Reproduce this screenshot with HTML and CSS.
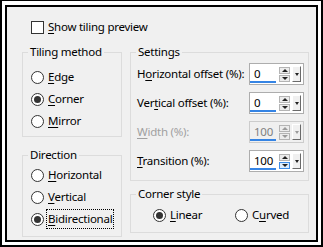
FILE: index.html
```html
<!DOCTYPE html>
<html lang="en">

<head>
    <meta charset="UTF-8">
    <title>Tiling</title>
    <link rel="stylesheet" href="styles.css">
</head>

<body>
    <div class="frame">
        <div class="dialog">
            <label class="check">
                <span class="box"></span>
                <span><u>S</u>how tiling preview</span>
            </label>

            <div class="groups">
                <div class="col">
                    <fieldset class="tiling">
                        <legend>Tiling method</legend>
                        <div class="radios">
                            <label class="radio"><span class="dot"></span><span><u>E</u>dge</span></label>
                            <label class="radio on"><span class="dot"></span><span><u>C</u>orner</span></label>
                            <label class="radio"><span class="dot"></span><span><u>M</u>irror</span></label>
                        </div>
                    </fieldset>
                    <fieldset class="direction">
                        <legend>Direction</legend>
                        <div class="radios">
                            <label class="radio"><span class="dot"></span><span><u>H</u>orizontal</span></label>
                            <label class="radio"><span class="dot"></span><span><u>V</u>ertical</span></label>
                            <label class="radio on"><span class="dot"></span><span class="focus"><u>B</u>idirectional</span></label>
                        </div>
                    </fieldset>
                </div>

                <div class="col">
                    <fieldset class="settings">
                        <legend>Settings</legend>
                        <div class="rows">
                            <div class="row">
                                <span>H<u>o</u>rizontal offset (%):</span>
                                <div class="spin">
                                    <span class="val">0</span>
                                    <span class="arrows"><i class="up"></i><i class="down"></i></span>
                                    <span class="drop"></span>
                                </div>
                            </div>
                            <div class="row">
                                <span>Ver<u>t</u>ical offset (%):</span>
                                <div class="spin">
                                    <span class="val">0</span>
                                    <span class="arrows"><i class="up"></i><i class="down"></i></span>
                                    <span class="drop"></span>
                                </div>
                            </div>
                            <div class="row disabled">
                                <span><u>W</u>idth (%):</span>
                                <div class="spin">
                                    <span class="val">100</span>
                                    <span class="arrows"><i class="up"></i><i class="down"></i></span>
                                    <span class="drop"></span>
                                </div>
                            </div>
                            <div class="row">
                                <span><u>T</u>ransition (%):</span>
                                <div class="spin">
                                    <span class="val">100</span>
                                    <span class="arrows"><i class="up"></i><i class="down hot"></i></span>
                                    <span class="drop"></span>
                                </div>
                            </div>
                        </div>
                    </fieldset>
                    <fieldset class="corner">
                        <legend>Corner style</legend>
                        <div class="inline">
                            <label class="radio on"><span class="dot"></span><span><u>L</u>inear</span></label>
                            <label class="radio"><span class="dot"></span><span>C<u>u</u>rved</span></label>
                        </div>
                    </fieldset>
                </div>
            </div>
        </div>
    </div>
</body>

</html>
```

FILE: styles.css
```css
* {
    box-sizing: border-box;
}

body {
    margin: 0;
    font-family: "Noto Sans", "Open Sans", sans-serif;
    font-size: 11.5px;
    letter-spacing: -0.25px;
    line-height: 16px;
    color: #000;
    background: #fff;
    white-space: nowrap;
}

u {
    text-decoration: underline;
    text-underline-offset: 2px;
}

.frame {
    width: 323px;
    height: 247px;
    border: solid #000;
    border-width: 1px 2px 2px 2px;
    padding: 4px 3px 3px 3px;
    background: #fff;
}

.dialog {
    height: 100%;
    border: 2px solid #000;
    background: #f0f0f0;
    padding-top: 12px;
}

.check {
    display: flex;
    align-items: center;
    gap: 4px;
    height: 16px;
    margin-left: 24px;
}

.check .box {
    width: 13px;
    height: 13px;
    border: 1px solid #333;
    background: #fff;
}

.groups {
    display: grid;
    grid-template-columns: 100px 179px;
    column-gap: 8px;
    margin: 9px 0 0 15px;
}

.col {
    display: flex;
    flex-direction: column;
}

fieldset {
    margin: 0;
    padding: 0;
    border: 1px solid #dcdcdc;
    min-width: 0;
}

legend {
    margin-left: 5px;
    padding: 0 2px;
}

.tiling {
    height: 93px;
}

.direction {
    height: 90px;
    margin-top: 10px;
}

.settings {
    height: 137px;
}

.corner {
    height: 47px;
    margin-top: 5px;
}

.radios {
    display: flex;
    flex-direction: column;
    gap: 6px;
    padding-left: 8px;
}

.tiling .radios {
    margin-top: 9px;
}

.direction .radios {
    margin-top: 4px;
}

.radio {
    display: flex;
    align-items: center;
    gap: 4px;
    height: 16px;
}

.radio .dot {
    width: 13px;
    height: 13px;
    border: 1px solid #333;
    border-radius: 50%;
    background: #fff;
    display: flex;
    align-items: center;
    justify-content: center;
}

.radio.on .dot::after {
    content: "";
    width: 7px;
    height: 7px;
    border-radius: 50%;
    background: #333;
}

.focus {
    outline: 1px dotted #000;
    outline-offset: 0;
    padding: 1px 1px;
    margin-left: -1px;
}

.inline {
    display: flex;
    margin: 5px 0 0 22px;
}

.inline .radio:first-child {
    width: 82px;
}

.rows {
    display: flex;
    flex-direction: column;
    gap: 7px;
    padding: 3px 4px 0 6px;
}

.row {
    display: flex;
    justify-content: space-between;
    align-items: center;
    height: 22px;
}

.spin {
    width: 55px;
    height: 22px;
    border: 1px solid #adadad;
    background: #fff;
    display: flex;
    align-items: center;
    padding-right: 2px;
}

.val {
    align-self: stretch;
    width: 27px;
    padding: 2px 0 0 4px;
    border-bottom: 2px solid #3584e4;
    margin-bottom: 1px;
}

.arrows {
    display: flex;
    flex-direction: column;
    gap: 1px;
    margin-left: 3px;
}

.arrows i {
    width: 11px;
    height: 7px;
    border: 1px solid #b4b4b4;
    background: #ececec;
    display: flex;
    align-items: center;
    justify-content: center;
}

.arrows i::after {
    content: "";
    border-left: 3px solid transparent;
    border-right: 3px solid transparent;
}

.arrows .up::after {
    border-bottom: 3px solid #222;
}

.arrows .down::after {
    border-top: 3px solid #222;
}

.arrows .hot {
    border-color: #3c8ce7;
    background: #dcecfc;
}

.drop {
    width: 9px;
    height: 16px;
    margin-left: 2px;
    border: 1px solid;
    border-color: #fff #6a6a6a #6a6a6a #fff;
    background: #f0f0f0;
    display: flex;
    align-items: center;
    justify-content: center;
}

.drop::after {
    content: "";
    border-left: 2px solid transparent;
    border-right: 2px solid transparent;
    border-top: 3px solid #222;
}

.disabled {
    color: #a0a0a0;
}

.disabled .spin {
    background: #f0f0f0;
    border-color: #cccccc;
}

.disabled .val {
    color: #808080;
}

.disabled .arrows .up::after {
    border-bottom-color: #9a9a9a;
}

.disabled .arrows .down::after,
.disabled .drop::after {
    border-top-color: #9a9a9a;
}
```
